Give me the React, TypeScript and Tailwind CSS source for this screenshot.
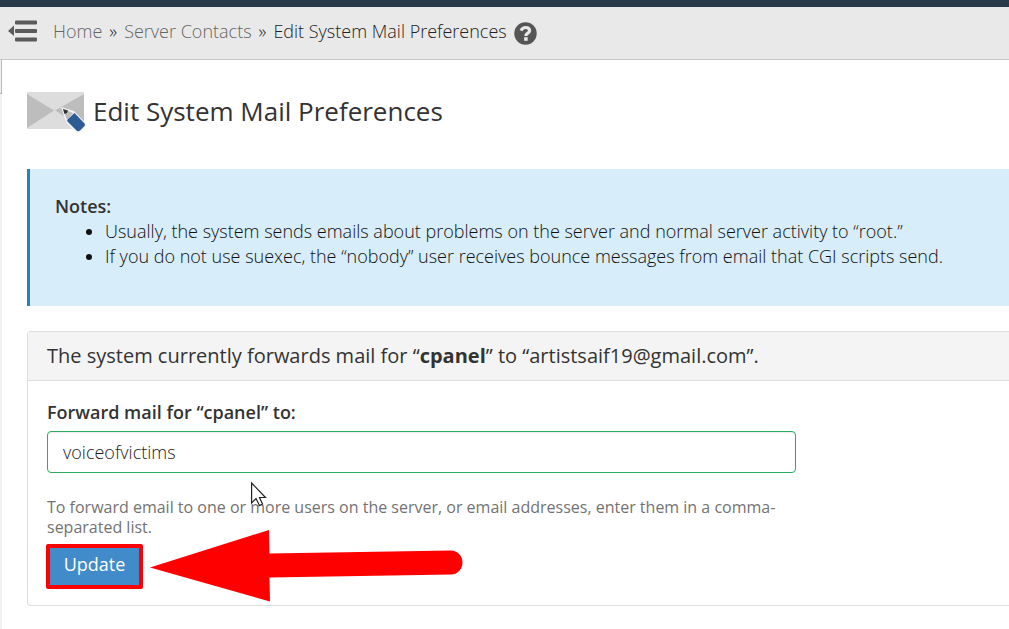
import React, { useState } from 'react';

const notes = [
  'Usually, the system sends emails about problems on the server and normal server activity to “root.”',
  'If you do not use suexec, the “nobody” user receives bounce messages from email that CGI scripts send.',
];

function MenuIcon() {
  return (
    <svg width="30" height="22" viewBox="0 0 30 22" fill="#5a5a5a" aria-hidden="true">
      <path d="M0 11 L6 5.5 V16 Z" />
      <rect x="7" y="0.5" width="22" height="4" rx="1" />
      <rect x="7" y="9" width="22" height="4" rx="1" />
      <rect x="7" y="17.5" width="22" height="4" rx="1" />
    </svg>
  );
}

function HelpIcon() {
  return (
    <svg width="23" height="23" viewBox="0 0 23 23" aria-hidden="true">
      <circle cx="11.5" cy="11.5" r="11.2" fill="#555" />
      <path d="M7 8.6 C8 6.5 9.6 5.5 11.6 5.5 C14 5.5 15.6 6.8 15.6 8.7 C15.6 11.2 11.8 11.2 11.8 14" fill="none" stroke="#e9e9e9" strokeWidth="3.2" />
      <rect x="10.1" y="15.2" width="3.6" height="3.6" fill="#e9e9e9" />
    </svg>
  );
}

function MailIcon() {
  return (
    <svg className="shrink-0" width="59" height="41" viewBox="0 0 59 41" aria-hidden="true">
      <rect width="57" height="37" rx="1" fill="#dcdddc" />
      <path d="M0 2 L27 18.5 L0 36 Z" fill="#bdbdbd" />
      <path d="M57 2 L28 18.5 L57 36 Z" fill="#bdbdbd" />
      <path d="M34 15 L47 19 L59 31.5 V34 L52 41 H49 L39 30 Z" fill="#f2f2f2" />
      <path d="M36 17 L46 21 L40 28 Z" fill="#bcbcbc" />
      <path d="M36 17 L41 18.5 L40 21 L37.5 22 Z" fill="#333" />
      <path d="M47.5 21 L57.5 31.5 Q58.5 33 57.5 34 L53 38.5 Q51 40 49.5 38.5 L40 29 L41 27 Z" fill="#2d5b94" />
    </svg>
  );
}

function Arrow() {
  return (
    <svg className="pointer-events-none absolute -top-4 left-26 max-w-none" width="314" height="74" viewBox="0 0 314 74" fill="#f00" aria-hidden="true">
      <path d="M0 39.5 L119 2 L119.5 25.5 L301 22.5 A11.5 12 0 0 1 301 46.5 L119.5 49.5 L120 73.5 Z" />
    </svg>
  );
}

function Pointer() {
  return (
    <svg className="pointer-events-none absolute -top-4 left-51" width="16" height="26" viewBox="0 0 16 26" aria-hidden="true">
      <path d="M0.6 2 V22 L5 17.5 L8.5 24.5 L11.5 23 L8.5 16.5 H14.5 Z" fill="#fff" stroke="#222" strokeWidth="1.2" />
    </svg>
  );
}

export default function App() {
  const [address, setAddress] = useState('voiceofvictims');

  return (
    <div className="flex min-h-screen flex-col overflow-hidden bg-white font-['Open_Sans',sans-serif] text-[18px] text-[#333]">
      <header className="flex h-15 shrink-0 items-center border-t-[7px] border-b border-t-[#293a4a] border-b-[#c8c8c8] bg-[#e9e9e9] pb-1 pl-2">
        <button type="button" aria-label="Toggle menu">
          <MenuIcon />
        </button>
        <nav className="ml-[15px] flex items-center gap-[7px] whitespace-nowrap font-light text-[#222]" aria-label="Breadcrumb">
          <a href="#home" className="text-[#666]">Home</a>
          <span>»</span>
          <a href="#contacts" className="text-[#666]">Server Contacts</a>
          <span>»</span>
          <span>Edit System Mail Preferences</span>
          <a href="#help" className="mt-1" aria-label="Help">
            <HelpIcon />
          </a>
        </nav>
      </header>

      <div className="flex flex-1">
        <div className="w-[2px] shrink-0 bg-[#f0f0f0]">
          <div className="h-[34px] border-r border-b border-[#bbb]" />
        </div>
        <main className="min-w-0 flex-1 pt-8 pb-6 pl-[25px]">
          <div className="flex items-start gap-[7px]">
            <MailIcon />
            <h1 className="text-[26px] leading-[38px]">Edit System Mail Preferences</h1>
          </div>

          <section className="mt-9 border-l-[3px] border-[#2a80b9] bg-[#d7edf9] px-[25px] pt-[25px] pb-[37px] leading-[25px]">
            <strong className="font-semibold">Notes:</strong>
            <ul className="list-disc pl-[50px] font-light text-[#111]">
              {notes.map((note) => (
                <li key={note}>{note}</li>
              ))}
            </ul>
          </section>

          <section className="mt-[25px] rounded-l border border-r-0 border-[#ddd]">
            <h2 className="border-b border-[#ddd] bg-[#f4f4f4] px-[19px] py-3 text-[20px] leading-[24px]">
              The system currently forwards mail for “<strong>cpanel</strong>” to “artistsaif19@gmail.com”.
            </h2>
            <form className="px-[19px] pt-[19px] pb-4" onSubmit={(e) => e.preventDefault()}>
              <div className="max-w-[749px]">
                <label className="block leading-[25px] font-semibold" htmlFor="address">
                  Forward mail for “cpanel” to:
                </label>
                <input
                  id="address"
                  type="text"
                  value={address}
                  onChange={(e) => setAddress(e.target.value)}
                  className="mt-[6px] block h-[42px] w-full rounded border border-[#27ae60] px-[15px] font-light text-[#222] shadow-[inset_0_1px_1px_rgba(0,0,0,0.08)]"
                />
                <div className="relative mt-6">
                  <p className="text-[16px] leading-[20px] text-[#737373]">
                    To forward email to one or more users on the server, or email addresses, enter them in a comma-separated list.
                  </p>
                  <Pointer />
                </div>
              </div>
              <div className="relative mt-[7px] -ml-px w-[97px]">
                <button type="submit" className="block h-[45px] w-full rounded-xs border-4 border-[#f00] bg-[#428bca] pb-1 text-white">
                  Update
                </button>
                <Arrow />
              </div>
            </form>
          </section>
        </main>
      </div>
    </div>
  );
}
